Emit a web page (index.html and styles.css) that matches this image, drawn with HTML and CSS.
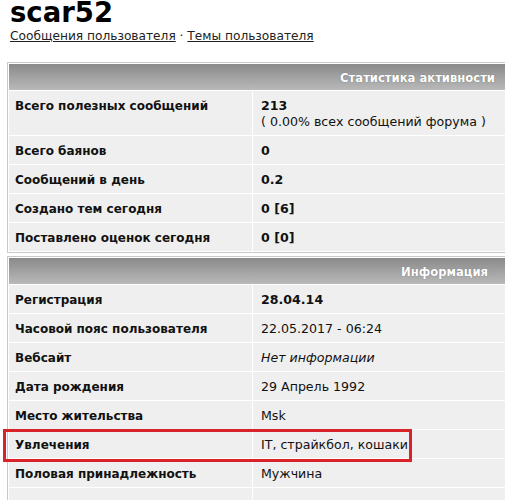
FILE: index.html
```html
<!DOCTYPE html>
<html lang="ru">
<head>
<meta charset="utf-8">
<title>scar52</title>
<link rel="stylesheet" href="styles.css">
</head>
<body>
<div class="page">
  <header class="profile-head">
    <h1 class="username">scar52</h1>
    <div class="links"><a href="#">Сообщения пользователя</a> · <a href="#">Темы пользователя</a></div>
  </header>

  <table class="box box-stats">
    <colgroup><col class="col-label"><col class="col-value"></colgroup>
    <tr><th colspan="2" class="box-title title-stats">Статистика активности</th></tr>
    <tr><td class="label">Всего полезных сообщений</td><td class="value"><b>213</b><br>( 0.00% всех сообщений форума )</td></tr>
    <tr><td class="label">Всего баянов</td><td class="value"><b>0</b></td></tr>
    <tr><td class="label">Сообщений в день</td><td class="value"><b>0.2</b></td></tr>
    <tr><td class="label">Создано тем сегодня</td><td class="value"><b>0 [6]</b></td></tr>
    <tr><td class="label">Поставлено оценок сегодня</td><td class="value"><b>0 [0]</b></td></tr>
  </table>

  <div class="info-wrap">
    <table class="box box-info">
      <colgroup><col class="col-label"><col class="col-value"></colgroup>
      <tr><th colspan="2" class="box-title title-info">Информация</th></tr>
      <tr><td class="label">Регистрация</td><td class="value"><b>28.04.14</b></td></tr>
      <tr><td class="label">Часовой пояс пользователя</td><td class="value">22.05.2017 - 06:24</td></tr>
      <tr><td class="label">Вебсайт</td><td class="value"><i>Нет информации</i></td></tr>
      <tr><td class="label">Дата рождения</td><td class="value">29 Апрель 1992</td></tr>
      <tr><td class="label">Место жительства</td><td class="value">Msk</td></tr>
      <tr><td class="label">Увлечения</td><td class="value">IT, страйкбол, кошаки</td></tr>
      <tr><td class="label">Половая принадлежность</td><td class="value">Мужчина</td></tr>
      <tr><td class="label">&nbsp;</td><td class="value">&nbsp;</td></tr>
    </table>
    <div class="highlight"></div>
  </div>
</div>
</body>
</html>
```

FILE: styles.css
```css
html, body {
  margin: 0;
  padding: 0;
  background: #ffffff;
  overflow: hidden;
}

.page {
  font-family: "DejaVu Sans", Verdana, sans-serif;
  color: #111;
  position: relative;
}

.profile-head {
  padding-left: 10px;
}

.username {
  margin: 0;
  font-size: 27.5px;
  line-height: 25px;
  font-weight: bold;
  color: #000;
}

.links {
  margin-top: 3px;
  font-size: 12.2px;
  line-height: 16px;
  color: #222;
}

.links a {
  color: #222;
  text-decoration: underline;
}

.box {
  margin-left: 7px;
  width: 512px;
  border: 1px solid #c9c9c9;
  border-collapse: separate;
  border-spacing: 1px;
  background: #ffffff;
  table-layout: fixed;
  font-size: 12.6px;
  line-height: 16px;
}

.col-label {
  width: 243px;
}

.box-stats {
  margin-top: 18px;
}

.box-title {
  height: 26px;
  padding: 2px 22px 0 6px;
  box-sizing: border-box;
  text-align: right;
  color: #ffffff;
  font-size: 11.6px;
  font-weight: bold;
  background: linear-gradient(#8a8a8a, #b9b9b9);
  text-shadow: 0 0 1px #666;
}

.title-info {
  padding-right: 29px;
}

.label,
.value {
  background: #efefef;
  padding: 7px 6px 5px;
  vertical-align: top;
  white-space: nowrap;
  overflow: hidden;
  color: #111;
}

.value {
  padding-left: 8px;
}

.label {
  font-weight: bold;
  font-size: 12px;
}

.value b {
  font-weight: bold;
}

.info-wrap {
  margin-top: 3px;
  position: relative;
}

.highlight {
  position: absolute;
  left: 3px;
  top: 173px;
  width: 403px;
  height: 27px;
  border: 3px solid #d9232b;
}
```
